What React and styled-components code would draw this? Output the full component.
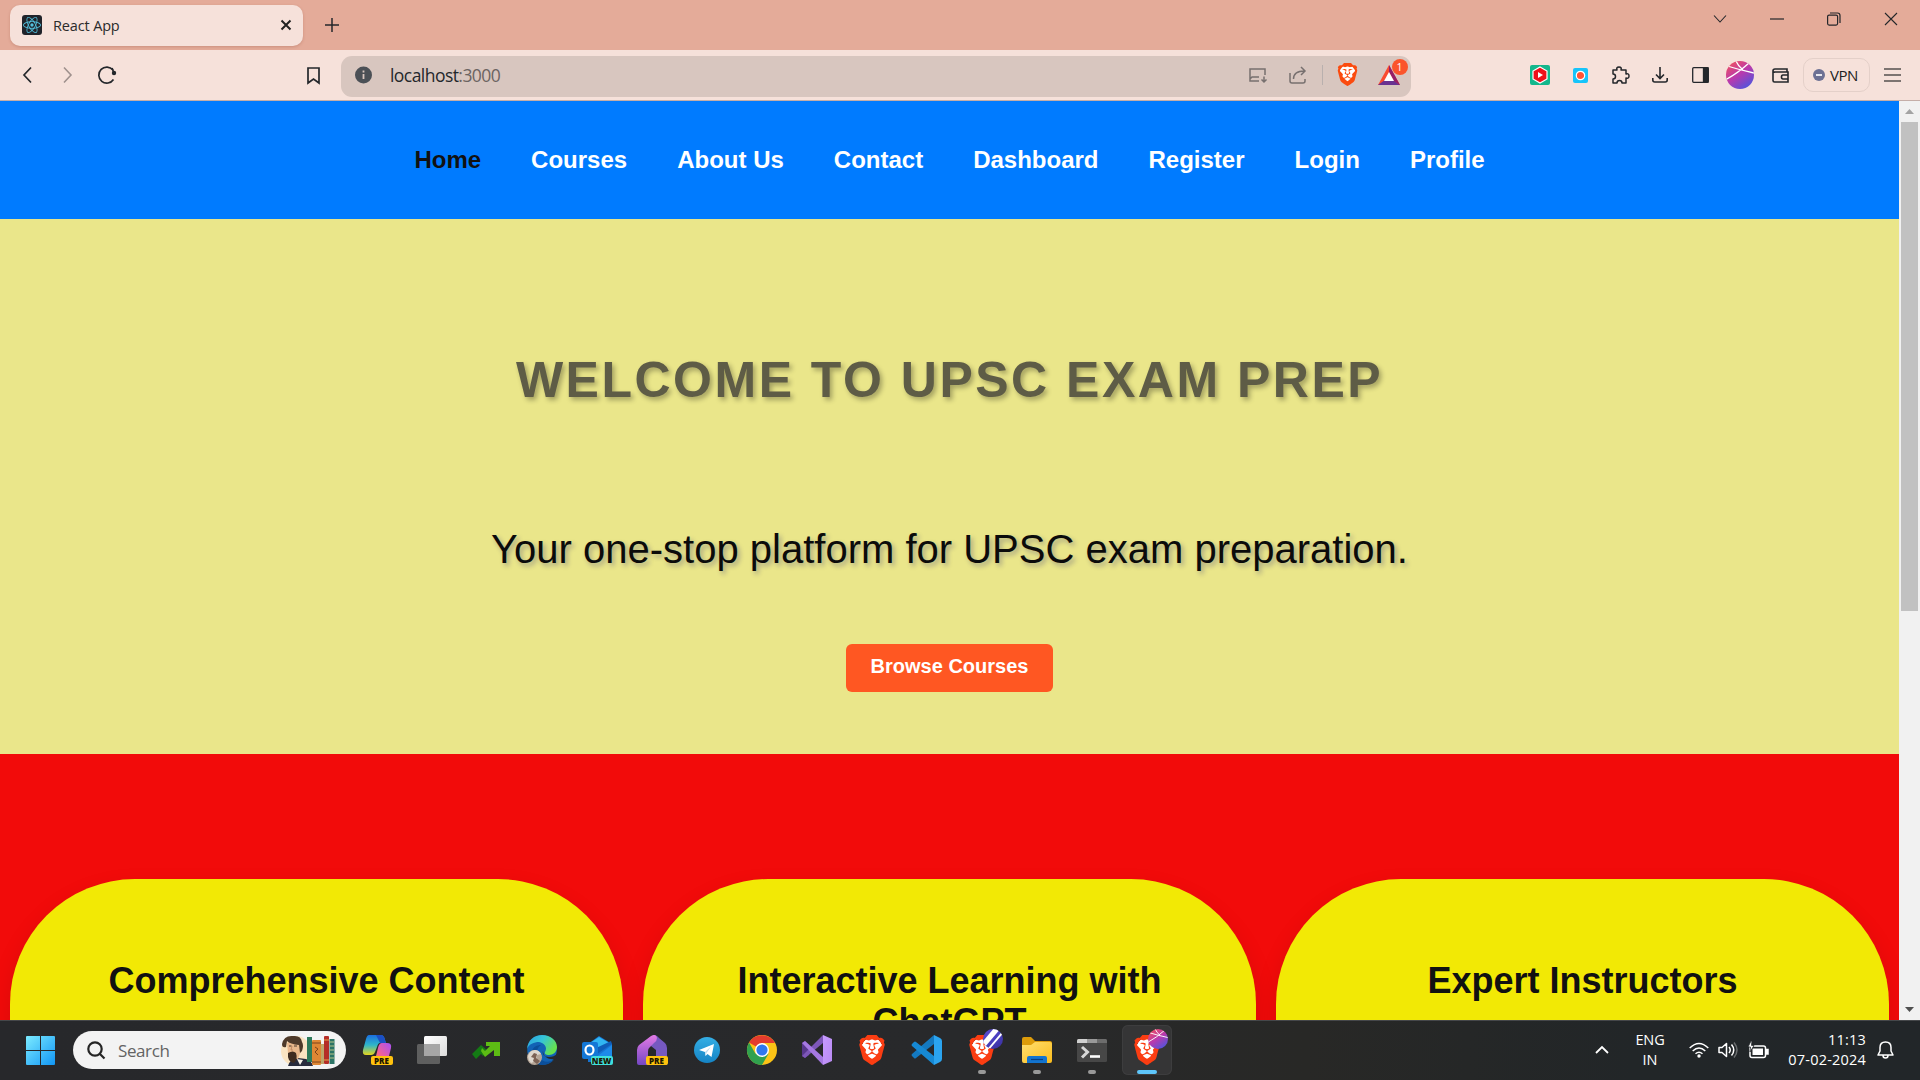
import React from "react";
import styled, { createGlobalStyle, css } from "styled-components";
import { SiBrave, SiReact } from "react-icons/si";

const GlobalStyle = createGlobalStyle`
  * { box-sizing: border-box; }
  html, body { margin: 0; padding: 0; overflow: hidden; }
  button { font: inherit; border: 0; background: none; padding: 0; color: inherit; }
`;

const ui = `"Open Sans", "Noto Sans", sans-serif`;
const page = `"Liberation Sans", Arial, sans-serif`;

const Screen = styled.div`
  width: 1920px;
  height: 1080px;
  display: flex;
  flex-direction: column;
  overflow: hidden;
  font-family: ${ui};
`;

/* ---------- Browser chrome ---------- */
const TitleBar = styled.header`
  height: 50px;
  flex: none;
  display: flex;
  align-items: flex-start;
  padding: 5px 0 0 10px;
  background: #e4ab99;
  color: #222;
`;
const Tab = styled.div`
  width: 293px;
  height: 41px;
  display: flex;
  align-items: center;
  padding: 0 12px 1px 12px;
  border-radius: 10px;
  background: #f6e1da;
  box-shadow: 0 1px 3px rgba(120, 50, 30, 0.22);
`;
const Favicon = styled.span`
  width: 20px;
  height: 20px;
  border-radius: 3px;
  background: #20232a;
  color: #53c1de;
  display: grid;
  place-items: center;
`;
const TabTitle = styled.span`
  flex: 1;
  margin-left: 11px;
  font-size: 14.5px;
  letter-spacing: -0.15px;
  color: #2b2b2b;
`;
const IconButton = styled.button`
  width: ${(p) => p.$w || 40}px;
  height: ${(p) => p.$h || 40}px;
  flex: none;
  display: grid;
  place-items: center;
  color: ${(p) => p.$color || "#24272b"};
`;
const WindowControls = styled.div`
  margin-left: auto;
  display: flex;
  margin-top: -5px;
`;
const Toolbar = styled.div`
  height: 51px;
  flex: none;
  display: flex;
  align-items: center;
  padding: 0 8px 0 7px;
  background: #f6e1da;
  border-bottom: 1px solid #c5aea8;
`;
const NavButtons = styled.div`
  display: flex;
  width: 286px;
`;
const AddressBar = styled.div`
  width: 1070px;
  height: 41px;
  margin: 3px 0 0 8px;
  display: flex;
  align-items: center;
  padding: 0 1px 4px 12px;
  border-radius: 11px;
  background: #d8c6bf;
`;
const Url = styled.div`
  flex: 1;
  margin-left: 16px;
  font-size: 17.5px;
  letter-spacing: -0.55px;
  color: #24272b;
  span { color: #6c6462; }
`;
const Divider = styled.i`
  width: 1px;
  height: 20px;
  margin: 0 4px;
  background: #b9b0ae;
`;
const BadgeHost = styled.span`
  position: relative;
  display: grid;
`;
const CountBadge = styled.b`
  position: absolute;
  left: 14px;
  top: -6px;
  width: 16px;
  height: 16px;
  border-radius: 8px;
  background: #fb542b;
  color: #fff;
  font: 400 10.5px/16px ${ui};
  text-align: center;
`;
const Extensions = styled.div`
  margin-left: auto;
  display: flex;
  align-items: center;
`;
const Vpn = styled.div`
  width: 67px;
  height: 34px;
  margin: 0 2px 0 3px;
  display: flex;
  align-items: center;
  justify-content: center;
  gap: 5px;
  border: 1px solid #e4d0c9;
  border-radius: 10px;
  padding-right: 2px;
  font-size: 15px;
  letter-spacing: -0.5px;
  color: #222;
`;

/* ---------- Web page ---------- */
const Viewport = styled.div`
  height: 919px;
  flex: none;
  display: flex;
  overflow: hidden;
`;
const Site = styled.main`
  flex: 1;
  min-width: 0;
  background: #f20b0a;
  font-family: ${page};
`;
const SiteNav = styled.nav`
  height: 118px;
  display: flex;
  align-items: center;
  justify-content: center;
  gap: 50px;
  background: #007bff;
`;
const SiteLink = styled.a`
  font-size: 24px;
  font-weight: 700;
  color: ${(p) => (p.$active ? "#111" : "#fff")};
`;
const Hero = styled.section`
  height: 535px;
  display: flex;
  flex-direction: column;
  align-items: center;
  padding-top: 130px;
  background: #eae68a;
`;
const HeroTitle = styled.h1`
  margin: 0;
  font-size: 50px;
  line-height: 62px;
  letter-spacing: 2.5px;
  text-transform: uppercase;
  color: #5e5c46;
  white-space: nowrap;
  text-shadow: 2.5px 2.5px 5px rgba(0, 0, 0, 0.3);
`;
const HeroText = styled.p`
  margin: 115px 0 0;
  font-size: 40px;
  line-height: 46px;
  color: #0b0b0b;
  white-space: nowrap;
  text-shadow: 2.5px 2.5px 5px rgba(0, 0, 110, 0.3);
`;
const BrowseButton = styled.button`
  && {
    width: 207px;
    height: 48px;
    margin-top: 72px;
    padding-bottom: 3px;
    border-radius: 6px;
    background: #ff5722;
    color: #fff;
    font: 700 20px ${page};
  }
`;
const Features = styled.section`
  display: grid;
  grid-template-columns: repeat(3, 1fr);
  gap: 20px;
  padding: 125px 10px 0;
`;
const Feature = styled.article`
  height: 420px;
  padding: 81px 62px 0;
  border-radius: 125px;
  background: #f2e905;
  box-shadow: 0 10px 25px rgba(0, 0, 0, 0.1);
  text-align: center;
`;
const FeatureTitle = styled.h2`
  margin: 0;
  font-size: 36px;
  line-height: 41px;
  color: #111;
`;
const ScrollBar = styled.aside`
  width: 21px;
  display: flex;
  flex-direction: column;
  align-items: center;
  background: #f1f1f1;
`;
const ScrollThumb = styled.i`
  width: 17px;
  height: 489px;
  background: #c1c1c1;
`;
const ScrollArrow = styled.span`
  height: 21px;
  display: grid;
  place-items: center;
  ${(p) => p.$end && css`margin-top: auto;`}
`;

/* ---------- Taskbar ---------- */
const Taskbar = styled.footer`
  height: 60px;
  flex: none;
  display: flex;
  align-items: center;
  padding-bottom: 1px;
  background: linear-gradient(90deg, #27282b, #28292b 50%, #282826 68%, #222628 85%, #222629);
  border-top: 1px solid #45474a;
`;
const StartButton = styled.button`
  width: 70px;
  height: 50px;
  padding: 1px 0 0 26px;
  display: flex;
  align-items: center;
`;
const SearchBox = styled.div`
  width: 273px;
  height: 38px;
  margin-left: 3px;
  display: flex;
  align-items: center;
  padding: 0 11px 0 14px;
  border-radius: 19px;
  background: #f3f3f3;
  font-size: 17px;
  letter-spacing: -0.4px;
  color: #636363;
  span { flex: 1; margin-left: 13px; }
`;
const Apps = styled.div`
  display: flex;
  margin-left: 3px;
`;
const AppTile = styled.div`
  width: 50px;
  height: 50px;
  margin: 0 2.5px;
  position: relative;
  display: grid;
  place-items: center;
  border-radius: 6px;
  ${(p) => p.$active && css`
    background: #353536;
    box-shadow: inset 0 0 0 1px #3d3d3e;
  `}
  &::after {
    content: "";
    display: ${(p) => (p.$running || p.$active ? "block" : "none")};
    position: absolute;
    bottom: 1px;
    left: ${(p) => (p.$active ? 15 : 21)}px;
    width: ${(p) => (p.$active ? 20 : 8)}px;
    height: 4px;
    border-radius: 2px;
    background: ${(p) => (p.$active ? "#5ec6fa" : "#999")};
  }
`;
const AppIcon = styled.span`
  position: relative;
  display: grid;
  place-items: center;
  width: 30px;
  height: 30px;
`;
const Tag = styled.b`
  position: absolute;
  right: -1px;
  bottom: 0;
  width: 22px;
  height: 9px;
  border-radius: 2px;
  background: ${(p) => p.$bg || "#ffc20e"};
  color: #1c1600;
  font: 800 8px/9px ${ui};
  text-align: center;
`;
const ProfileBadge = styled.span`
  position: absolute;
  left: 16px;
  top: -6px;
  display: grid;
`;
const Tray = styled.div`
  margin-left: auto;
  display: flex;
  align-items: center;
  color: #fff;
  padding-right: 26px;
`;
const TrayText = styled.div`
  width: ${(p) => p.$w}px;
  font-size: 14.5px;
  line-height: 20px;
  letter-spacing: ${(p) => p.$ls}px;
  text-align: ${(p) => p.$align};
`;
const TrayIcons = styled.div`
  display: flex;
  gap: 9px;
  margin: 0 13px 0 8px;
`;
const BellButton = styled.button`
  width: 28px;
  height: 40px;
  padding-left: 11px;
  display: flex;
  align-items: center;
  color: #fff;
`;
const Svg = styled.svg`
  display: block;
  overflow: visible;
`;

const Icon = ({ w = 20, h, sw = 1.6, children, vb }) => (
  <Svg width={w} height={h || w} viewBox={vb || `0 0 ${w} ${h || w}`} fill="none" stroke="currentColor" strokeWidth={sw}>
    {children}
  </Svg>
);

const LionShield = styled.span`
  display: grid;
  place-items: center;
  color: ${(p) => p.$color || "#fb4b0f"};
  background: radial-gradient(ellipse 36% 38% at 50% 46%, #fff 96%, transparent 100%);
`;
const Lion = ({ size, color }) => (
  <LionShield $color={color}><SiBrave size={size} /></LionShield>
);

const Globe = ({ size = 28, stripes }) => (
  <Icon w={size} vb="0 0 28 28" sw={0}>
    <defs>
      <linearGradient id={stripes ? "gs" : "gp"} x1="0.1" y1="0" x2="0.8" y2="1">
        <stop offset="0" stopColor={stripes ? "#5a4bd0" : "#f4515b"} />
        <stop offset="0.5" stopColor={stripes ? "#4a3fc0" : "#b83aae"} />
        <stop offset="1" stopColor={stripes ? "#3b32a0" : "#4a56e0"} />
      </linearGradient>
      <clipPath id="gc"><circle cx="14" cy="14" r="14" /></clipPath>
    </defs>
    <circle cx="14" cy="14" r="14" fill={`url(#${stripes ? "gs" : "gp"})`} />
    {stripes ? (
      <g clipPath="url(#gc)" stroke="#fff">
        <path d="M-1 24 21-2" strokeWidth="7.500" />
        <path d="M7 29 29 3" strokeWidth="2.600" />
      </g>
    ) : (
      <g clipPath="url(#gc)" stroke="#fff" strokeWidth="1.300">
        <path d="M0 18.500Q12 12 23 2M3 5.500Q14 9 28 12M10 0Q12 5 17 9" />
      </g>
    )}
  </Icon>
);

const Author = () => (
  <Icon w={54} h={31} sw={0}>
    <circle cx="15" cy="16" r="15" fill="#fae4c2" />
    <path d="M7 31q3-9 10-8l8 1q6 2 7 7z" fill="#272b3d" />
    <path d="M16 24l6 1-3 5z" fill="#f6f1e8" />
    <path d="M6 8q8-5 13 1l1 7-3 8-8-1-2-5z" fill="#e9b88c" />
    <path d="M1 9Q3 0 12 1q8-1 9 6 2 3 0 9l-2 2-1-8Q9 9 6 6l-1 6q-4 1-4-3z" fill="#4e3a2a" />
    <path d="M8 11h2.500M13 11h3" stroke="#4e3a2a" strokeWidth="1" />
    <path d="m11 11-1 4h2" stroke="#b97e57" strokeWidth=".8" />
    <path d="M7 18q5-3 8 0 2 6-2 10-7-1-6-10z" fill="#3f2c20" />
    <rect x="26" y="2" width="5" height="25" fill="#2d7a5b" />
    <rect x="31" y="5" width="9" height="25" rx="1" fill="#df8734" />
    <path d="M31 8h9M31 27h9M34 12l3 2-3 3 3 3" stroke="#7d431a" strokeWidth="1" />
    <rect x="40" y="9" width="3" height="20" fill="#bda66a" />
    <rect x="43" y="1" width="5" height="28" rx="1" fill="#b52d27" />
    <path d="M43 5h5M43 25h5" stroke="#e7a14a" strokeWidth="1.200" />
    <rect x="48.500" y="4" width="5" height="25" fill="#2c7466" />
    <path d="M49 7h4M49 11h4M49 15h4M49 19h4M49 23h4" stroke="#b9c489" strokeWidth="1" />
  </Icon>
);

const Gradients = () => (
  <defs>
    <linearGradient id="cpa" x1="0" y1="0" x2="0" y2="1"><stop stopColor="#1b6fe0" /><stop offset=".5" stopColor="#2fb5c9" /><stop offset="1" stopColor="#e5d61c" /></linearGradient>
    <linearGradient id="cpb" x1="1" y1="0" x2="0" y2="1"><stop stopColor="#a850f5" /><stop offset=".6" stopColor="#f0609a" /><stop offset="1" stopColor="#fd8b4a" /></linearGradient>
    <linearGradient id="edg" x1="0" y1="0" x2="1" y2=".5"><stop stopColor="#2b9fe0" /><stop offset=".5" stopColor="#35c4d8" /><stop offset="1" stopColor="#66e34f" /></linearGradient>
    <linearGradient id="dev" x1="0" y1="0" x2="0" y2="1"><stop stopColor="#e47be6" /><stop offset="1" stopColor="#7447c4" /></linearGradient>
    <linearGradient id="tg" x1="0" y1="0" x2="0" y2="1"><stop stopColor="#34aee4" /><stop offset="1" stopColor="#1584c5" /></linearGradient>
    <linearGradient id="fld" x1="0" y1="0" x2="1" y2="1"><stop stopColor="#ffdf70" /><stop offset="1" stopColor="#fbbc1c" /></linearGradient>
    <linearGradient id="vsr" x1="0" y1="0" x2="1" y2="1"><stop stopColor="#c79bff" /><stop offset="1" stopColor="#b98af3" /></linearGradient>
    <linearGradient id="sqa" x1="0" y1="0" x2="1" y2="1"><stop stopColor="#fff" /><stop offset="1" stopColor="#dcdcdc" /></linearGradient>
    <linearGradient id="win" gradientUnits="userSpaceOnUse" x1="0" y1="0" x2="29" y2="29"><stop stopColor="#7cebff" /><stop offset="1" stopColor="#1196f5" /></linearGradient>
  </defs>
);

const WindowsLogo = () => (
  <Icon w={29} sw={0}>
    <Gradients />
    <path fill="url(#win)" d="M1 0h13v14H0V1q0-1 1-1zM15 0h13q1 0 1 1v13H15zM0 15h14v14H1q-1 0-1-1zM15 15h14v13q0 1-1 1H15z" />
  </Icon>
);
const Copilot = () => (
  <Icon w={30} sw={0}>
    <path d="M7 0h12q3 0 4 5l1 3h-6q-2 0-3 4l-2 5q-1 3-4 3H4q-4 0-3-5L4 4q1-4 3-4z" fill="url(#cpa)" />
    <path d="M14 0h5q3 0 4 5l1 3h-6z" fill="#1b4fc4" />
    <path d="M20 8h5q5 0 4 5l-2 8q-2 7-6 7h-6q-3 0-2-3l3-12q1-5 4-5z" fill="url(#cpb)" />
  </Icon>
);
const Squares = () => (
  <Icon w={30} h={28} sw={0}>
    <rect x="7" width="23" height="20" rx="1.500" fill="url(#sqa)" />
    <rect y="8" width="23" height="20" rx="1.500" fill="#666" fillOpacity=".88" />
    <rect x="7" y="8" width="16" height="12" fill="#a6a6a6" />
  </Icon>
);
const GreenArrow = () => (
  <Icon w={30} h={18} sw={0}>
    <path d="M0 13 9 4l7 6-5 5-2-2-5 5z" fill="#147a14" />
    <path d="M9 10l4 6 9-7v6h6V1H14v4h4l-5 5-3-3z" fill="#5dbb14" />
  </Icon>
);
const Edge = () => (
  <Icon w={30} sw={0}>
    <circle cx="15" cy="15" r="14.800" fill="#1263b5" />
    <path d="M0 14C1 5 7 0 15 0c9 0 15 6 15 12 0 5-4 8-8 8-3 0-5-1-4-3 3-5-1-9-6-10C7 7 2 9 0 14z" fill="url(#edg)" />
    <path d="M16 16c-1 3 1 6 6 6 3 0 6-1 9-4v4l-3 2c-6 1-12-2-12-8z" fill="#28292b" />
    <path d="M14 10c-4 2-5 8-2 12 3 5 9 6 15 3-3 3-7 5-12 5C7 29 4 22 5 16c1-4 5-6 9-6z" fill="#0b4f9b" />
    <circle cx="7.500" cy="22.500" r="7.500" fill="#b6a698" />
    <path d="M1 21q2-6 7-6 4 0 6 4l-4 1-1 6-5 2q-3-3-3-7z" fill="#ded7ce" />
    <path d="M7 18l3 1-1 4 4 3-3 3-4-3 1-3-3-1z" fill="#7c6255" />
  </Icon>
);
const Outlook = () => (
  <Icon w={30} h={28} sw={0}>
    <path d="M6 8 17 0l13 8v18H6z" fill="#1673d1" />
    <path d="M8 7 17 1l12 7-11 7z" fill="#31b6f2" />
    <path d="m12 13 17-8 1 3-18 12z" fill="#0f5db8" />
    <path d="m13 22 17-13v17H13z" fill="#1d8ae8" />
    <rect y="6" width="16" height="17" rx="2" fill="#1377d6" />
    <ellipse cx="7.500" cy="14" rx="4" ry="4.500" stroke="#fff" strokeWidth="2.200" />
  </Icon>
);
const DevHome = () => (
  <Icon w={30} sw={0}>
    <path d="M16 0q4 0 6 3l6 5q2 2 2 5v17H19V15l-5-4z" fill="#7659c0" />
    <path d="M14 1q5-3 6 2 0 3-3 5l-5 5q-1 1-1 4v13H2q-2 0-2-2V15q0-3 2-5z" fill="url(#dev)" />
  </Icon>
);
const Telegram = () => (
  <Icon w={26} sw={0}>
    <circle cx="13" cy="13" r="13" fill="url(#tg)" />
    <path d="M5 13 20 7 17.500 20l-4-3-2 2-.5-4z" fill="#fff" /><path d="m11 15 6-5.500-4.500 6.500-1 3z" fill="#bddcf0" />
  </Icon>
);
const Chrome = () => (
  <Icon w={30} sw={0}>
    <circle cx="15" cy="15" r="15" fill="#fbc316" />
    <path d="M15 15 2 7.500A15 15 0 0 1 28 8H15z" fill="#e33b2e" />
    <path d="M2 7.500A15 15 0 0 0 15 30l6.500-11.200L15 15 8.500 18.700z" fill="#30a14e" />
    <circle cx="15" cy="15" r="7" fill="#fff" /><circle cx="15" cy="15" r="5.600" fill="#2f78ee" />
  </Icon>
);
const VisualStudio = () => (
  <Icon w={30} sw={0}>
    <path d="M0 8v13l3 2 4-3V10L3 6z" fill="#57378c" />
    <path d="M0 21 21 0v8L3 23z" fill="#7d57b8" />
    <path d="M3 6 21 22v8L0 8z" fill="#a578e2" />
    <path d="m21 0 9 4v22l-9 4z" fill="url(#vsr)" />
  </Icon>
);
const VsCode = () => (
  <Icon w={30} sw={0}>
    <path d="M22 0v9L4 23q-1 1-2 0l-2-2q-1-1 0-2z" fill="#1479c0" />
    <path d="M22 30v-9L4 7Q3 6 2 7L0 9q-1 1 0 2z" fill="#1689d4" />
    <path d="m22 0 6 3q2 1 2 3v18q0 2-2 3l-6 3z" fill="#2ba4f0" />
  </Icon>
);
const Folder = () => (
  <Icon w={30} h={27} sw={0}>
    <path d="M0 2q0-2 2-2h7l4 4h15q2 0 2 2v6H0z" fill="#dd9c0a" />
    <path d="M0 8h9l4-3h15q2 0 2 2v17q0 2-2 2H2q-2 0-2-2z" fill="url(#fld)" />
    <path d="M5 26v-5q0-2 2-2h16q2 0 2 2v5z" fill="#1374cf" /><path d="M9 22.500h12" stroke="#083f83" strokeWidth="1.200" />
  </Icon>
);
const Terminal = () => (
  <Icon w={30} h={23} sw={0}>
    <rect width="30" height="23" rx="1.500" fill="#474747" />
    <path d="M0 4V1.500Q0 0 1.500 0H10v4z" fill="#d0d0d0" /><path d="M10 0h10v4H10z" fill="#999" /><path d="M20 0h8.500Q30 0 30 1.500V4H20z" fill="#6d6d6d" />
    <path d="m5 8 5.500 5L5 18.500" stroke="#d8d8d8" strokeWidth="3" /><path d="M13 17.500h10" stroke="#fff" strokeWidth="2.600" />
  </Icon>
);

const links = ["Home", "Courses", "About Us", "Contact", "Dashboard", "Register", "Login", "Profile"];
const features = ["Comprehensive Content", "Interactive Learning with ChatGPT", "Expert Instructors"];
const apps = [
  { icon: <Copilot />, tag: "PRE" },
  { icon: <Squares /> },
  { icon: <GreenArrow /> },
  { icon: <Edge /> },
  { icon: <Outlook />, tag: "NEW", bg: "#3fe0dc" },
  { icon: <DevHome />, tag: "PRE" },
  { icon: <Telegram /> },
  { icon: <Chrome /> },
  { icon: <VisualStudio /> },
  { icon: <Lion size={30} color="#fb3d12" /> },
  { icon: <VsCode /> },
  { icon: <Lion size={30} color="#fb3d12" />, running: true, badge: <Globe size={20} stripes /> },
  { icon: <Folder />, running: true },
  { icon: <Terminal />, running: true },
  { icon: <Lion size={30} color="#fb3d12" />, active: true, badge: <Globe size={20} /> },
];

export default function App() {
  return (
    <Screen>
      <GlobalStyle />
      <TitleBar>
        <Tab>
          <Favicon><SiReact size={18} /></Favicon>
          <TabTitle>React App</TabTitle>
          <Icon w={10} sw={2}><path d="m.5.500 9 9M9.500.500l-9 9" /></Icon>
        </Tab>
        <IconButton $w={58} $h={40}><Icon w={14} sw={1.5}><path d="M7 0v14M0 7h14" /></Icon></IconButton>
        <WindowControls>
          <IconButton $w={56} $h={37}><Icon w={14} h={8} sw={1.1}><path d="m1 .5 6 6.500 6-6.500" /></Icon></IconButton>
          <IconButton $w={57} $h={37}><Icon w={14} h={2} sw={1.2}><path d="M0 1h14" /></Icon></IconButton>
          <IconButton $w={57} $h={37}><Icon w={14} sw={1.2}><rect x=".6" y="3.100" width="10" height="10" rx="1.500" /><path d="M3 1h7.500q2.500 0 2.500 2.500V11" /></Icon></IconButton>
          <IconButton $w={58} $h={37}><Icon w={14} sw={1.1}><path d="m1 1 12 12M13 1 1 13" /></Icon></IconButton>
        </WindowControls>
      </TitleBar>
      <Toolbar>
        <NavButtons>
          <IconButton><Icon w={9} h={16} sw={1.7}><path d="M8 .5 1 8l7 7.500" /></Icon></IconButton>
          <IconButton $color="#9f918d"><Icon w={9} h={16} sw={1.6}><path d="m1 .5 7 7.500-7 7.500" /></Icon></IconButton>
          <IconButton><Icon w={18} sw={1.7}><path d="M15 4A8 8 0 1 0 15.500 13.500" /><circle cx="16" cy="7" r="2.200" fill="currentColor" stroke="none" /><path d="m14 2 2 5" /></Icon></IconButton>
        </NavButtons>
        <IconButton><Icon w={13} h={17} sw={1.7}><path d="M1 1h11v15l-5.500-4L1 16z" /></Icon></IconButton>
        <AddressBar>
          <Icon w={21} sw={0}><circle cx="10.500" cy="11" r="8.500" fill="#4b5056" /><path d="M10.500 10v5M10.500 6.500v2" stroke="#d8c6bf" strokeWidth="1.800" /></Icon>
          <Url>localhost<span>:3000</span></Url>
          <IconButton $color="#77706f"><Icon w={18} h={14} sw={1.5}><path d="M10 13H1V1h15v6M1 11l2-2h7M15 8.500V14M12.500 11.500 15 14l2.500-2.500" /></Icon></IconButton>
          <IconButton $color="#77706f"><Icon w={18} h={18} sw={1.5}><path d="M1 7v8q0 2 2 2h11q2 0 2-2v-2M4.500 13q0-8 11-8M12 1l4 4-4 4" /></Icon></IconButton>
          <Divider />
          <IconButton><Lion size={23} /></IconButton>
          <IconButton $w={43}>
            <BadgeHost>
              <Icon w={22} h={20} sw={0}><path d="M11 0 22 20H0z" fill="#fa4b30" /><path d="M0 20 11 12l11 8z" fill="#693391" /><path d="m11 0 11 20-6-4-5-9z" fill="#941f68" /><path d="m11 7 5 9H6z" fill="#fff" /></Icon>
              <CountBadge>1</CountBadge>
            </BadgeHost>
          </IconButton>
        </AddressBar>
        <Extensions>
          <IconButton><Icon w={20} sw={0}><rect width="20" height="20" rx="2" fill="#13b78c" /><path d="m10 2 7 4v8l-7 4-7-4V6z" fill="#f0101b" stroke="#fff" strokeWidth="1.200" /><path d="m8 7 5 3-5 3z" fill="#fff" /></Icon></IconButton>
          <IconButton><Icon w={15} sw={0}><rect width="15" height="15" rx="2" fill="#16c4fa" /><circle cx="7.500" cy="7.500" r="4.200" fill="#ff5436" stroke="#fff" strokeWidth="1.200" /></Icon></IconButton>
          <IconButton><Icon w={18} sw={1.5}><path d="M2 4h4q-1-3 2-3t2 3h5v4q3-1 3 2t-3 2v5h-4q0-2.500-2.500-2.500T6 17H2v-4q2.500 0 2.500-2.500T2 8z" strokeLinejoin="round" /></Icon></IconButton>
          <IconButton><Icon w={16} sw={1.6}><path d="M8 0v11M4 7.500 8 11.500l4-4M.8 11v2q0 2 2 2h10.400q2 0 2-2v-2" /></Icon></IconButton>
          <IconButton><Icon w={17} h={16} sw={1.3}><rect x=".7" y=".7" width="15.600" height="14.600" rx="1" /><path d="M11.500 1H16v14h-4.500z" fill="currentColor" /></Icon></IconButton>
          <IconButton><Globe size={28} /></IconButton>
          <IconButton><Icon w={17} h={15} sw={1.6}><path d="M15 4V1H3Q1 1 1 2.700T3 4h13v10H2.500Q1 14 1 12.500v-10M16 7h-5q-1.500 0-1.500 2T11 11h5" /></Icon></IconButton>
          <Vpn><Icon w={12} sw={0}><circle cx="6" cy="6" r="6" fill="#6d7194" /><path d="M3 6h6" stroke="#fff" strokeWidth="1.700" /></Icon>VPN</Vpn>
          <IconButton $color="#55504f"><Icon w={17} h={14} sw={1.6}><path d="M0 1h17M0 7h17M0 13h17" /></Icon></IconButton>
        </Extensions>
      </Toolbar>

      <Viewport>
        <Site>
          <SiteNav>{links.map((l, i) => <SiteLink key={l} $active={i === 0}>{l}</SiteLink>)}</SiteNav>
          <Hero>
            <HeroTitle>Welcome to UPSC Exam Prep</HeroTitle>
            <HeroText>Your one-stop platform for UPSC exam preparation.</HeroText>
            <BrowseButton>Browse Courses</BrowseButton>
          </Hero>
          <Features>{features.map((f) => <Feature key={f}><FeatureTitle>{f}</FeatureTitle></Feature>)}</Features>
        </Site>
        <ScrollBar>
          <ScrollArrow><Icon w={9} h={5} sw={0}><path d="M4.500 0 9 5H0z" fill="#a3a3a3" /></Icon></ScrollArrow>
          <ScrollThumb />
          <ScrollArrow $end><Icon w={9} h={5} sw={0}><path d="M0 0h9L4.500 5z" fill="#505050" /></Icon></ScrollArrow>
        </ScrollBar>
      </Viewport>

      <Taskbar>
        <StartButton><WindowsLogo /></StartButton>
        <SearchBox>
          <Icon w={18} sw={2.2}><g stroke="#252525"><circle cx="8" cy="8" r="6.700" /><path d="m12.500 12.500 5 5" /></g></Icon>
          <span>Search</span>
          <Author />
        </SearchBox>
        <Apps>
          {apps.map((a, i) => (
            <AppTile key={i} $running={a.running} $active={a.active}>
              <AppIcon>
                {a.icon}
                {a.tag && <Tag $bg={a.bg}>{a.tag}</Tag>}
                {a.badge && <ProfileBadge>{a.badge}</ProfileBadge>}
              </AppIcon>
            </AppTile>
          ))}
        </Apps>
        <Tray>
          <IconButton $color="#fff" $w={34}><Icon w={14} h={8} sw={1.8}><path d="m1 7 6-6 6 6" /></Icon></IconButton>
          <TrayText $w={62} $align="center" $ls={-0.1}>ENG<br />IN</TrayText>
          <TrayIcons>
            <Icon w={20} h={16} sw={1.5}><path d="M.7 6q9.300-9 18.600 0M3.700 9q6.300-6 12.600 0M6.500 11.800q3.500-3 7 0" /><circle cx="10" cy="14" r="1.700" fill="currentColor" stroke="none" /></Icon>
            <Icon w={21} h={16} sw={1.5}><path d="M1 5.500h3L8.500 1.500v13L4 10.500H1z" strokeLinejoin="round" /><path d="M11 5q2.500 3 0 6M13.500 2.500q4.500 5.500 0 11" /><path d="M16 .5q6 7.500 0 15" stroke="#696c6e" /></Icon>
            <Icon w={21} h={17} sw={1.5}><rect x="2" y="4" width="15.500" height="11.500" rx="2" /><path d="M4.500 6.500h10.500V13H4.500z" fill="currentColor" stroke="none" /><path d="M18.500 7.500h1.500v4.500h-1.500z" fill="currentColor" /><path d="M3-1 0 5h2.500L2 10l4-6.500H3.500L4-1z" fill="#fff" stroke="#222629" strokeWidth=".8" /></Icon>
          </TrayIcons>
          <TrayText $w={84} $align="right" $ls={0.2}>11:13<br />07-02-2024</TrayText>
          <BellButton><Icon w={17} h={18} sw={1.5}><path d="M1 14h15l-2-4V6.500Q14 1 8.500 1T3 6.500V10zM6 14.500Q6 17 8.500 17t2.500-2.500" strokeLinejoin="round" /></Icon></BellButton>
        </Tray>
      </Taskbar>
    </Screen>
  );
}
